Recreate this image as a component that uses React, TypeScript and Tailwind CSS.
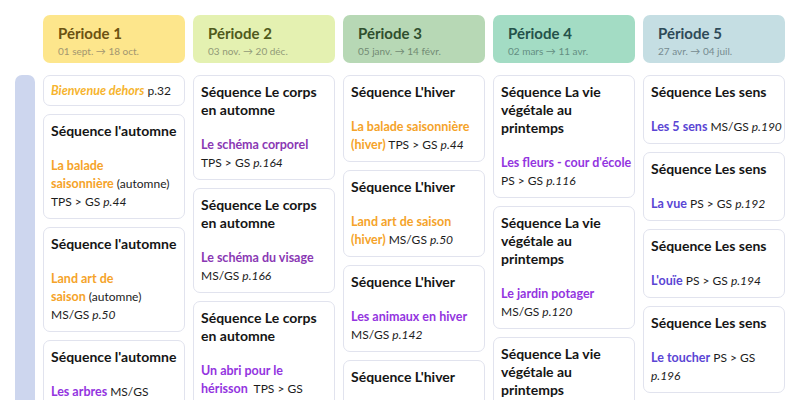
import type { ReactNode } from 'react';

const ORANGE = 'text-[#f5a329]';
const PLUM = 'text-[#8a38b4]';
const VIOLET = 'text-[#9334e0]';
const INDIGO = 'text-[#5a45d4]';

const periods = [
    { name: 'Période 1', dates: '01 sept. → 18 oct.', bg: 'bg-[#fde68c]', title: 'text-[#6b5212]', date: 'text-[#a39670]' },
    { name: 'Période 2', dates: '03 nov. → 20 déc.', bg: 'bg-[#e4f1b1]', title: 'text-[#4f5a1c]', date: 'text-[#929a78]' },
    { name: 'Période 3', dates: '05 janv. → 14 févr.', bg: 'bg-[#b7d8b5]', title: 'text-[#2f4f2e]', date: 'text-[#728a73]' },
    { name: 'Période 4', dates: '02 mars → 11 avr.', bg: 'bg-[#a3dcc4]', title: 'text-[#24524a]', date: 'text-[#638e82]' },
    { name: 'Période 5', dates: '27 avr. → 04 juil.', bg: 'bg-[#c5dee3]', title: 'text-[#2e4a58]', date: 'text-[#768b90]' },
];

function Page({ n }: { n: string }) {
    return <span className="italic">p.{n}</span>;
}

// activity name, bold and coloured
function Act({ c, children }: { c: string; children: ReactNode }) {
    return <span className={`text-[12.5px] font-bold ${c}`}>{children}</span>;
}

function Card({ title, children }: { title: string[]; children: ReactNode }) {
    return (
        <div className="rounded-[7px] border border-[#e1e3ee] bg-white p-[7px] text-[12px] leading-[18px] text-[#1c1c1c]">
            <div className="mb-[17px] text-[14px] font-bold leading-[18px] text-[#151515]">
                {title.map((t) => (
                    <div key={t} className="whitespace-nowrap">{t}</div>
                ))}
            </div>
            {children}
        </div>
    );
}

const automne = ['Séquence l\'automne'];
const corps = ['Séquence Le corps', 'en automne'];
const hiver = ['Séquence L\'hiver'];
const vegetale = ['Séquence La vie', 'végétale au', 'printemps'];
const sens = ['Séquence Les sens'];

export default function App() {
    return (
        <div className="h-[400px] w-[800px] overflow-hidden bg-white font-['Lato',sans-serif]">
            <div className="grid grid-cols-[20px_repeat(5,142px)] gap-x-2 pl-[15px] pt-[15px]">
                <div />
                {periods.map((p) => (
                    <div key={p.name} className={`rounded-[7px] ${p.bg} px-[15px] pt-[9px] pb-[5px]`}>
                        <div className={`text-[15px] font-bold leading-[18px] ${p.title}`}>{p.name}</div>
                        <div className={`mt-[2px] text-[10px] leading-[14px] ${p.date}`}>{p.dates}</div>
                    </div>
                ))}

                <div className="mt-3 h-[400px] rounded-t-[7px] bg-[#cdd6ee]" />

                {/* Période 1 */}
                <div className="mt-3 flex flex-col gap-2">
                    <div className="whitespace-nowrap rounded-[7px] border border-[#e1e3ee] px-[7px] pt-[6px] pb-[5px] text-[12px] leading-[18px] text-[#1c1c1c]">
                        <span className="text-[12.5px] font-bold italic text-[#f6b42e]">Bienvenue dehors</span> p.32
                    </div>
                    <Card title={automne}>
                        <div><Act c={ORANGE}>La balade</Act></div>
                        <div><Act c={ORANGE}>saisonnière</Act> (automne)</div>
                        <div>TPS &gt; GS <Page n="44" /></div>
                    </Card>
                    <Card title={automne}>
                        <div><Act c={ORANGE}>Land art de</Act></div>
                        <div><Act c={ORANGE}>saison</Act> (automne)</div>
                        <div>MS/GS <Page n="50" /></div>
                    </Card>
                    <Card title={automne}>
                        <div><Act c={VIOLET}>Les arbres</Act> MS/GS</div>
                        <div><Page n="76" /></div>
                    </Card>
                </div>

                {/* Période 2 */}
                <div className="mt-3 flex flex-col gap-2">
                    <Card title={corps}>
                        <div><Act c={PLUM}>Le schéma corporel</Act></div>
                        <div>TPS &gt; GS <Page n="164" /></div>
                    </Card>
                    <Card title={corps}>
                        <div><Act c={PLUM}>Le schéma du visage</Act></div>
                        <div>MS/GS <Page n="166" /></div>
                    </Card>
                    <Card title={corps}>
                        <div><Act c={VIOLET}>Un abri pour le</Act></div>
                        <div><Act c={VIOLET}>hérisson</Act>&nbsp; TPS &gt; GS</div>
                        <div><Page n="168" /></div>
                    </Card>
                </div>

                {/* Période 3 */}
                <div className="mt-3 flex flex-col gap-2">
                    <Card title={hiver}>
                        <div className="whitespace-nowrap"><Act c={ORANGE}>La balade saisonnière</Act></div>
                        <div><Act c={ORANGE}>(hiver)</Act> TPS &gt; GS <Page n="44" /></div>
                    </Card>
                    <Card title={hiver}>
                        <div><Act c={ORANGE}>Land art de saison</Act></div>
                        <div><Act c={ORANGE}>(hiver)</Act> MS/GS <Page n="50" /></div>
                    </Card>
                    <Card title={hiver}>
                        <div className="whitespace-nowrap"><Act c={VIOLET}>Les animaux en hiver</Act></div>
                        <div>MS/GS <Page n="142" /></div>
                    </Card>
                    <Card title={hiver}>
                        <div><Act c={VIOLET}>Les traces</Act></div>
                        <div>MS/GS <Page n="144" /></div>
                    </Card>
                </div>

                {/* Période 4 */}
                <div className="mt-3 flex flex-col gap-2">
                    <Card title={vegetale}>
                        <div className="whitespace-nowrap"><Act c={VIOLET}>Les fleurs - cour d'école</Act></div>
                        <div>PS &gt; GS <Page n="116" /></div>
                    </Card>
                    <Card title={vegetale}>
                        <div><Act c={VIOLET}>Le jardin potager</Act></div>
                        <div>MS/GS <Page n="120" /></div>
                    </Card>
                    <Card title={vegetale}>
                        <div><Act c={VIOLET}>Les semis</Act></div>
                        <div>PS &gt; GS <Page n="122" /></div>
                    </Card>
                </div>

                {/* Période 5 */}
                <div className="mt-3 flex flex-col gap-2">
                    <Card title={sens}>
                        <div className="whitespace-nowrap"><Act c={INDIGO}>Les 5 sens</Act> MS/GS <Page n="190" /></div>
                    </Card>
                    <Card title={sens}>
                        <div><Act c={INDIGO}>La vue</Act> PS &gt; GS <Page n="192" /></div>
                    </Card>
                    <Card title={sens}>
                        <div><Act c={INDIGO}>L'ouïe</Act> PS &gt; GS <Page n="194" /></div>
                    </Card>
                    <Card title={sens}>
                        <div><Act c={INDIGO}>Le toucher</Act> PS &gt; GS</div>
                        <div><Page n="196" /></div>
                    </Card>
                    <Card title={sens}>
                        <div><Act c={INDIGO}>Le goût</Act> PS &gt; GS <Page n="198" /></div>
                    </Card>
                </div>
            </div>
        </div>
    );
}
